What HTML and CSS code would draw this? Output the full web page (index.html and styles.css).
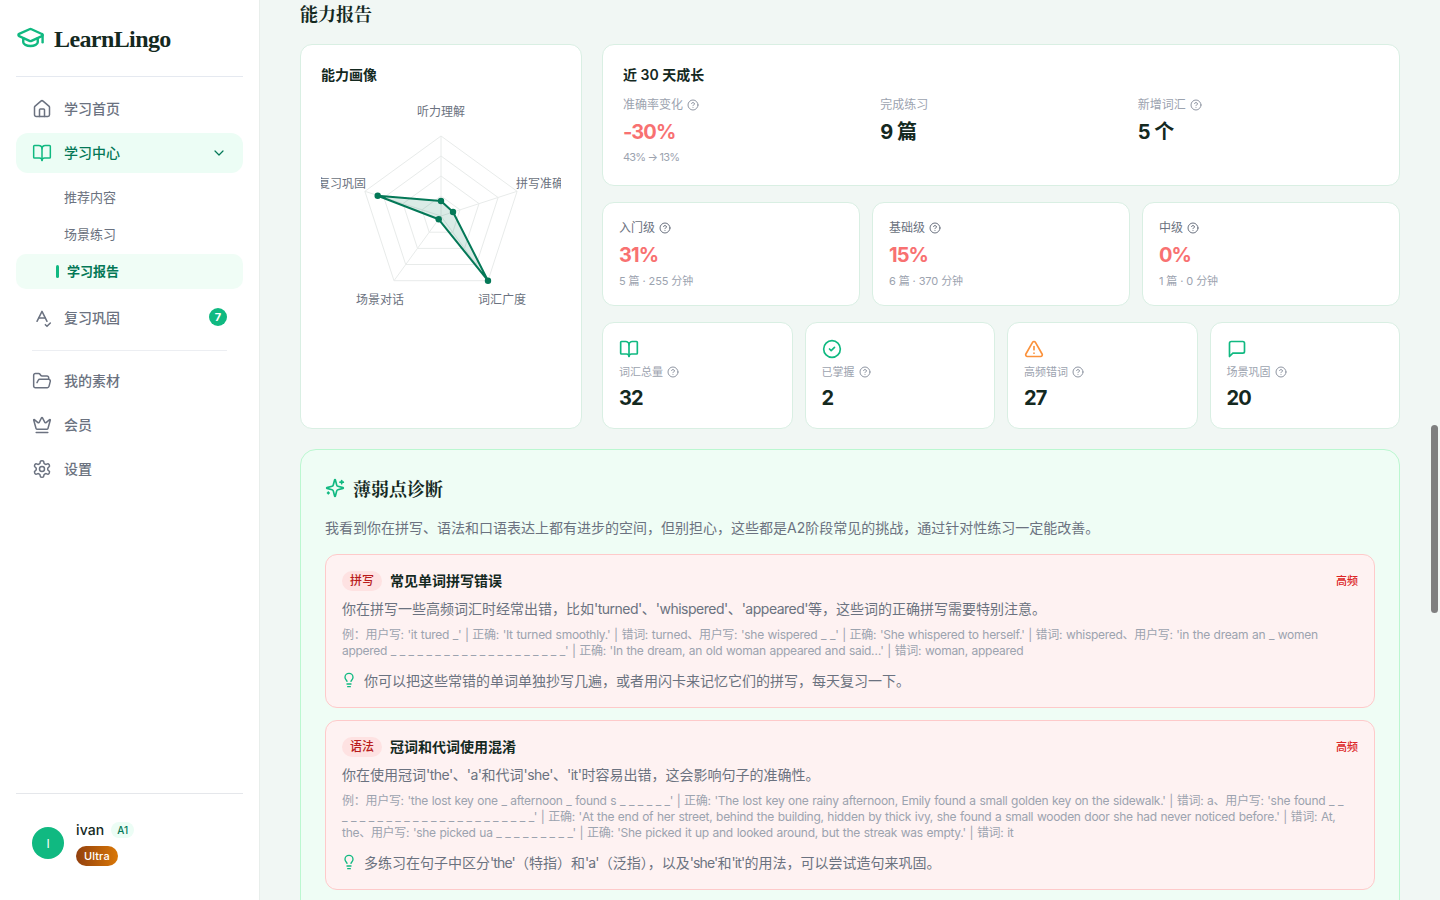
FILE: index.html
```html
<!DOCTYPE html>
<html lang="zh-CN">
<head>
<meta charset="utf-8">
<title>LearnLingo</title>
<link rel="stylesheet" href="styles.css">
</head>
<body>
<svg class="defs" aria-hidden="true">
  <symbol id="i-home" viewBox="0 0 24 24"><path d="M15 21v-8a1 1 0 0 0-1-1h-4a1 1 0 0 0-1 1v8"/><path d="M3 10a2 2 0 0 1 .709-1.528l7-5.999a2 2 0 0 1 2.582 0l7 5.999A2 2 0 0 1 21 10v9a2 2 0 0 1-2 2H5a2 2 0 0 1-2-2z"/></symbol>
  <symbol id="i-book" viewBox="0 0 24 24"><path d="M12 7v14"/><path d="M3 18a1 1 0 0 1-1-1V4a1 1 0 0 1 1-1h5a4 4 0 0 1 4 4 4 4 0 0 1 4-4h5a1 1 0 0 1 1 1v13a1 1 0 0 1-1 1h-6a3 3 0 0 0-3 3 3 3 0 0 0-3-3z"/></symbol>
  <symbol id="i-chev" viewBox="0 0 24 24"><path d="m6 9 6 6 6-6"/></symbol>
  <symbol id="i-spell" viewBox="0 0 24 24"><path d="m6 16 6-12 6 12"/><path d="M8 12h8"/><path d="m16 20 2 2 4-4"/></symbol>
  <symbol id="i-folder" viewBox="0 0 24 24"><path d="m6 14 1.5-2.9A2 2 0 0 1 9.24 10H20a2 2 0 0 1 1.94 2.5l-1.54 6a2 2 0 0 1-1.95 1.5H4a2 2 0 0 1-2-2V5a2 2 0 0 1 2-2h3.9a2 2 0 0 1 1.69.9l.81 1.2a2 2 0 0 0 1.67.9H18a2 2 0 0 1 2 2v2"/></symbol>
  <symbol id="i-crown" viewBox="0 0 24 24"><path d="M11.562 3.266a.5.5 0 0 1 .876 0L15.39 8.87a1 1 0 0 0 1.516.294L21.183 5.5a.5.5 0 0 1 .798.519l-2.834 10.246a1 1 0 0 1-.956.734H5.81a1 1 0 0 1-.957-.734L2.02 6.02a.5.5 0 0 1 .798-.519l4.276 3.664a1 1 0 0 0 1.516-.294z"/><path d="M5 21h14"/></symbol>
  <symbol id="i-gear" viewBox="0 0 24 24"><path d="M12.22 2h-.44a2 2 0 0 0-2 2v.18a2 2 0 0 1-1 1.73l-.43.25a2 2 0 0 1-2 0l-.15-.08a2 2 0 0 0-2.73.73l-.22.38a2 2 0 0 0 .73 2.73l.15.1a2 2 0 0 1 1 1.72v.51a2 2 0 0 1-1 1.74l-.15.09a2 2 0 0 0-.73 2.73l.22.38a2 2 0 0 0 2.73.73l.15-.08a2 2 0 0 1 2 0l.43.25a2 2 0 0 1 1 1.73V20a2 2 0 0 0 2 2h.44a2 2 0 0 0 2-2v-.18a2 2 0 0 1 1-1.73l.43-.25a2 2 0 0 1 2 0l.15.08a2 2 0 0 0 2.73-.73l.22-.39a2 2 0 0 0-.73-2.73l-.15-.08a2 2 0 0 1-1-1.74v-.5a2 2 0 0 1 1-1.74l.15-.09a2 2 0 0 0 .73-2.73l-.22-.38a2 2 0 0 0-2.73-.73l-.15.08a2 2 0 0 1-2 0l-.43-.25a2 2 0 0 1-1-1.73V4a2 2 0 0 0-2-2z"/><circle cx="12" cy="12" r="3"/></symbol>
  <symbol id="i-cap" viewBox="0 0 24 24"><path d="M21.42 10.922a1 1 0 0 0-.019-1.838L12.83 5.18a2 2 0 0 0-1.66 0L2.6 9.08a1 1 0 0 0 0 1.832l8.57 3.908a2 2 0 0 0 1.66 0z"/><path d="M22 10v6"/><path d="M6 12.5V16a6 3 0 0 0 12 0v-3.5"/></symbol>
  <symbol id="i-spark" viewBox="0 0 24 24"><path d="M9.937 15.5A2 2 0 0 0 8.5 14.063l-6.135-1.582a.5.5 0 0 1 0-.962L8.5 9.936A2 2 0 0 0 9.937 8.5l1.582-6.135a.5.5 0 0 1 .963 0L14.063 8.5A2 2 0 0 0 15.5 9.937l6.135 1.581a.5.5 0 0 1 0 .964L15.5 14.063a2 2 0 0 0-1.437 1.437l-1.582 6.135a.5.5 0 0 1-.963 0z"/><path d="M20 3v4"/><path d="M22 5h-4"/><path d="M4 17v2"/><path d="M5 18H3"/></symbol>
  <symbol id="i-bulb" viewBox="0 0 24 24"><path d="M15 14c.2-1 .7-1.7 1.5-2.5 1-.9 1.5-2.2 1.5-3.5A6 6 0 0 0 6 8c0 1 .2 2.2 1.5 3.5.7.7 1.3 1.5 1.5 2.5"/><path d="M9 18h6"/><path d="M10 22h4"/></symbol>
  <symbol id="i-help" viewBox="0 0 24 24"><circle cx="12" cy="12" r="10"/><path d="M9.09 9a3 3 0 0 1 5.83 1c0 2-3 3-3 3"/><path d="M12 17h.01"/></symbol>
  <symbol id="i-check" viewBox="0 0 24 24"><circle cx="12" cy="12" r="10"/><path d="m9 12 2 2 4-4"/></symbol>
  <symbol id="i-alert" viewBox="0 0 24 24"><path d="m21.73 18-8-14a2 2 0 0 0-3.48 0l-8 14A2 2 0 0 0 4 21h16a2 2 0 0 0 1.73-3"/><path d="M12 9v4"/><path d="M12 17h.01"/></symbol>
  <symbol id="i-msg" viewBox="0 0 24 24"><path d="M21 15a2 2 0 0 1-2 2H7l-4 4V5a2 2 0 0 1 2-2h14a2 2 0 0 1 2 2z"/></symbol>
</svg>

<div class="app">
  <aside class="sidebar">
    <div class="logo">
      <svg class="ico logo-ico"><use href="#i-cap"/></svg>
      <span class="logo-text">LearnLingo</span>
    </div>
    <nav class="nav">
      <a class="nav-item"><svg class="ico"><use href="#i-home"/></svg><span>学习首页</span></a>
      <a class="nav-item active"><svg class="ico"><use href="#i-book"/></svg><span>学习中心</span><svg class="ico chev"><use href="#i-chev"/></svg></a>
      <div class="sub">
        <a class="sub-item"><span>推荐内容</span></a>
        <a class="sub-item"><span>场景练习</span></a>
        <a class="sub-item current"><i class="bar"></i><span>学习报告</span></a>
      </div>
      <a class="nav-item review"><svg class="ico"><use href="#i-spell"/></svg><span>复习巩固</span><b class="badge">7</b></a>
      <div class="nav-divider"></div>
      <a class="nav-item"><svg class="ico"><use href="#i-folder"/></svg><span>我的素材</span></a>
      <a class="nav-item"><svg class="ico"><use href="#i-crown"/></svg><span>会员</span></a>
      <a class="nav-item"><svg class="ico"><use href="#i-gear"/></svg><span>设置</span></a>
    </nav>
    <div class="user">
      <div class="avatar">I</div>
      <div class="user-info">
        <div class="user-line"><span class="user-name">ivan</span><span class="level">A1</span></div>
        <span class="ultra">Ultra</span>
      </div>
    </div>
  </aside>

  <main class="main">
    <h1 class="page-title">能力报告</h1>
    <section class="overview">
      <div class="card radar-card">
        <h3 class="card-title">能力画像</h3>
        <svg class="radar" viewBox="0 0 240 240" width="240" height="240">
          <g class="grid-lines">
            <polygon points="120,100 139,113.8 131.8,136.2 108.2,136.2 101,113.8"/>
            <polygon points="120,80 158,107.6 143.5,152.4 96.5,152.4 82,107.6"/>
            <polygon points="120,60 177.1,101.5 155.3,168.5 84.7,168.5 62.9,101.5"/>
            <polygon points="120,40 196.1,95.3 167,184.7 73,184.7 43.9,95.3"/>
            <path d="M120 120V40M120 120L196.1 95.3M120 120L167 184.7M120 120L73 184.7M120 120L43.9 95.3"/>
          </g>
          <polygon class="shape" points="120,105 132,116 167,184.7 117.7,123.3 56.7,99.7"/>
          <g class="dots">
            <circle cx="120" cy="105" r="3.2"/><circle cx="132" cy="116" r="3.2"/><circle cx="167" cy="184.7" r="3.2"/><circle cx="117.7" cy="123.3" r="3.2"/><circle cx="56.7" cy="99.7" r="3.2"/>
          </g>
          <g class="labels">
            <text x="120" y="20" text-anchor="middle">听力理解</text>
            <text x="195" y="92" text-anchor="start">拼写准确</text>
            <text x="181" y="208" text-anchor="middle">词汇广度</text>
            <text x="59" y="208" text-anchor="middle">场景对话</text>
            <text x="45" y="92" text-anchor="end">复习巩固</text>
          </g>
        </svg>
      </div>

      <div class="right">
        <div class="card growth">
          <h3 class="card-title growth-title">近 30 天成长</h3>
          <div class="growth-grid">
            <div>
              <div class="g-label">准确率变化<svg class="ico help"><use href="#i-help"/></svg></div>
              <div class="g-value red">-30%</div>
              <div class="g-sub">43% → 13%</div>
            </div>
            <div>
              <div class="g-label">完成练习</div>
              <div class="g-value">9 篇</div>
            </div>
            <div>
              <div class="g-label">新增词汇<svg class="ico help"><use href="#i-help"/></svg></div>
              <div class="g-value">5 个</div>
            </div>
          </div>
        </div>

        <div class="levels">
          <div class="card level-card">
            <div class="l-label">入门级<svg class="ico help dark"><use href="#i-help"/></svg></div>
            <div class="l-value">31%</div>
            <div class="l-sub">5 篇 · 255 分钟</div>
          </div>
          <div class="card level-card">
            <div class="l-label">基础级<svg class="ico help dark"><use href="#i-help"/></svg></div>
            <div class="l-value">15%</div>
            <div class="l-sub">6 篇 · 370 分钟</div>
          </div>
          <div class="card level-card">
            <div class="l-label">中级<svg class="ico help dark"><use href="#i-help"/></svg></div>
            <div class="l-value">0%</div>
            <div class="l-sub">1 篇 · 0 分钟</div>
          </div>
        </div>

        <div class="stats">
          <div class="card stat-card">
            <svg class="ico stat-ico green"><use href="#i-book"/></svg>
            <div class="s-label">词汇总量<svg class="ico help"><use href="#i-help"/></svg></div>
            <div class="s-value">32</div>
          </div>
          <div class="card stat-card">
            <svg class="ico stat-ico green"><use href="#i-check"/></svg>
            <div class="s-label">已掌握<svg class="ico help"><use href="#i-help"/></svg></div>
            <div class="s-value">2</div>
          </div>
          <div class="card stat-card">
            <svg class="ico stat-ico orange"><use href="#i-alert"/></svg>
            <div class="s-label">高频错词<svg class="ico help"><use href="#i-help"/></svg></div>
            <div class="s-value">27</div>
          </div>
          <div class="card stat-card">
            <svg class="ico stat-ico green"><use href="#i-msg"/></svg>
            <div class="s-label">场景巩固<svg class="ico help"><use href="#i-help"/></svg></div>
            <div class="s-value">20</div>
          </div>
        </div>
      </div>
    </section>

    <section class="diagnosis">
      <h2 class="diag-title"><svg class="ico spark"><use href="#i-spark"/></svg>薄弱点诊断</h2>
      <p class="diag-intro">我看到你在拼写、语法和口语表达上都有进步的空间，但别担心，这些都是A2阶段常见的挑战，通过针对性练习一定能改善。</p>

      <article class="issue">
        <header class="issue-head"><span class="tag">拼写</span><h4 class="issue-title">常见单词拼写错误</h4><span class="freq">高频</span></header>
        <p class="issue-desc">你在拼写一些高频词汇时经常出错，比如<span class="en">'turned'</span>、<span class="en">'whispered'</span>、<span class="en">'appeared'</span>等，这些词的正确拼写需要特别注意。</p>
        <p class="issue-ex">例：用户写: 'it tured _' | 正确: 'It turned smoothly.' | 错词: turned、用户写: 'she wispered _ _' | 正确: 'She whispered to herself.' | 错词: whispered、用户写: 'in the dream an _ women appered _ _ _ _ _ _ _ _ _ _ _ _ _ _ _ _ _ _ _ _' | 正确: 'In the dream, an old woman appeared and said…' | 错词: woman, appeared</p>
        <div class="issue-tip"><svg class="ico bulb"><use href="#i-bulb"/></svg><span>你可以把这些常错的单词单独抄写几遍，或者用闪卡来记忆它们的拼写，每天复习一下。</span></div>
      </article>

      <article class="issue">
        <header class="issue-head"><span class="tag">语法</span><h4 class="issue-title">冠词和代词使用混淆</h4><span class="freq">高频</span></header>
        <p class="issue-desc">你在使用冠词<span class="en">'the'</span>、<span class="en">'a'</span>和代词<span class="en">'she'</span>、<span class="en">'it'</span>时容易出错，这会影响句子的准确性。</p>
        <p class="issue-ex">例：用户写: 'the lost key one _ afternoon _ found s _ _ _ _ _ _' | 正确: 'The lost key one rainy afternoon, Emily found a small golden key on the sidewalk.' | 错词: a、用户写: 'she found _ _<br>_ _ _ _ _ _ _ _ _ _ _ _ _ _ _ _ _ _ _ _ _ _' | 正确: 'At the end of her street, behind the building, hidden by thick ivy, she found a small wooden door she had never noticed before.' | 错词: At,<br>the、用户写: 'she picked ua _ _ _ _ _ _ _ _ _' | 正确: 'She picked it up and looked around, but the streak was empty.' | 错词: it</p>
        <div class="issue-tip"><svg class="ico bulb"><use href="#i-bulb"/></svg><span>多练习在句子中区分<span class="en">'the'</span>（特指）和<span class="en">'a'</span>（泛指），以及<span class="en">'she'</span>和<span class="en">'it'</span>的用法，可以尝试造句来巩固。</span></div>
      </article>
    </section>
  </main>
  <div class="scroll-thumb"></div>
</div>
</body>
</html>
```

FILE: styles.css
```css
* { box-sizing: border-box; }
html, body { margin: 0; height: 100%; overflow: hidden; }
body {
  font-family: Inter, "Noto Sans CJK SC", sans-serif;
  color: #14291f;
  background: #f1f7f4;
}
h1, h2, h3, h4, p { margin: 0; }
.defs { width: 0; height: 0; position: absolute; }
.ico {
  width: 20px; height: 20px; flex: none;
  fill: none; stroke: currentColor; stroke-width: 2;
  stroke-linecap: round; stroke-linejoin: round;
}
.app { display: flex; height: 900px; position: relative; }

/* Sidebar */
.sidebar {
  width: 260px; flex: none; height: 900px; background: #fff;
  border-right: 1px solid #e8eeeb;
  padding: 0 16px; display: flex; flex-direction: column;
}
.logo {
  height: 77px; display: flex; align-items: center; gap: 9px;
  border-bottom: 1px solid #e5e9f0; padding-top: 2px;
}
.logo-ico { width: 29px; height: 29px; color: #10b981; margin-top: -4px; }
.logo-text {
  font-family: "Liberation Serif", serif; font-size: 24px; font-weight: 700;
  letter-spacing: -.6px; color: #14291f; line-height: 1;
}
.nav { display: flex; flex-direction: column; gap: 4px; padding-top: 12px; flex: 1; }
.nav-item {
  height: 40px; display: flex; align-items: center; gap: 12px;
  padding: 0 16px; border-radius: 12px; font-size: 14px; font-weight: 500; color: #6b7280;
}
.nav-item > span, .sub-item > span { margin-bottom: 2px; }
.nav-item .ico { width: 20px; height: 20px; stroke-width: 1.8; }
.nav-item.active { background: #ecfdf5; color: #047857; }
.nav-item.active .ico { color: #10b981; }
.nav-item.active .chev { margin-left: auto; width: 16px; height: 16px; color: #047857; }
.sub { display: flex; flex-direction: column; gap: 2px; padding-top: 3px; }
.sub-item {
  height: 35px; display: flex; align-items: center; padding-left: 48px;
  border-radius: 10px; font-size: 13px; color: #6b7280;
}
.sub-item.current { background: #f0fdf6; color: #047857; font-weight: 600; padding-left: 40px; gap: 8px; }
.bar { width: 3px; height: 13px; border-radius: 2px; background: #10b981; }
.review { margin-top: 5px; }
.badge {
  margin-left: auto; margin-bottom: 2px; width: 18px; height: 18px; border-radius: 50%;
  background: #10b981; color: #fff; font-size: 11px; font-weight: 700;
  display: flex; align-items: center; justify-content: center;
}
.nav-divider { height: 1px; background: #eceef2; margin: 8px 16px 6px; }
.user {
  height: 107px; border-top: 1px solid #e5e7eb; display: flex; align-items: center;
  gap: 12px; padding: 0 16px 8px; margin-top: auto;
}
.avatar {
  width: 32px; height: 32px; border-radius: 50%; background: #10b981; color: #fff;
  font-size: 12px; display: flex; align-items: center; justify-content: center;
}
.user-info { display: flex; flex-direction: column; align-items: flex-start; gap: 6px; }
.user-line { display: flex; align-items: center; gap: 7px; }
.user-name { font-size: 14px; font-weight: 500; color: #14291f; line-height: 20px; letter-spacing: .1px; }
.level {
  font-size: 10px; font-weight: 500; color: #047857; background: #ecfdf5;
  padding: 0 6px; height: 16px; line-height: 16px; border-radius: 8px;
}
.ultra {
  font-size: 11px; font-weight: 500; color: #fff; height: 20px; line-height: 20px;
  padding: 0 8px; border-radius: 10px; letter-spacing: .1px;
  background: linear-gradient(90deg, #92400e, #d97706);
}

/* Main */
.main { flex: 1; min-width: 0; padding: 0 40px; overflow: hidden; }
.page-title {
  font-family: "Noto Serif CJK SC", "Liberation Serif", serif;
  font-size: 18px; font-weight: 700; line-height: 26px; margin-bottom: 18px; color: #14291f;
}
.overview { display: grid; grid-template-columns: 282px 1fr; gap: 20px; }
.card { background: #fff; border: 1px solid #d9efe3; border-radius: 12px; }
.card-title { font-size: 14px; font-weight: 600; line-height: 20px; color: #14291f; }
.radar-card { padding: 20px 20px 0; }
.radar { display: block; margin-top: 11px; }
.grid-lines polygon, .grid-lines path { fill: none; stroke: #e8ebea; stroke-width: 1; }
.shape { fill: rgba(4,120,87,.15); stroke: #047857; stroke-width: 2; stroke-linejoin: round; }
.dots circle { fill: #047857; }
.labels text { font-size: 12px; fill: #6b7280; font-family: Inter, "Noto Sans CJK SC", sans-serif; }
.right { display: flex; flex-direction: column; gap: 16px; min-width: 0; }
.growth { padding: 20px; }
.growth-title { margin-bottom: 11px; }
.growth-grid { display: grid; grid-template-columns: repeat(3, 1fr); gap: 16px; }
.help { width: 12px; height: 12px; margin-left: 4px; color: #8f96a3; vertical-align: -2px; }
.help.dark { color: #6b7280; }
.g-label { font-size: 12px; line-height: 18px; color: #9ca3af; }
.g-value { font-size: 20px; font-weight: 700; line-height: 30px; margin-top: 3px; color: #14291f; letter-spacing: -.5px; }
.g-value.red { letter-spacing: -.9px; }
.g-value.red, .l-value { color: #f87171; }
.g-sub { font-size: 11px; line-height: 16px; color: #9ca3af; margin-top: 2px; letter-spacing: -.8px; }
.levels { display: grid; grid-template-columns: repeat(3, 1fr); gap: 12px; }
.level-card { padding: 16px; height: 104px; }
.l-label { font-size: 12px; line-height: 18px; color: #6b7280; }
.l-value { font-size: 20px; font-weight: 700; line-height: 28px; margin-top: 4px; letter-spacing: -.9px; }
.l-sub { font-size: 11px; line-height: 16px; color: #9ca3af; margin-top: 4px; letter-spacing: -.1px; }
.stats { display: grid; grid-template-columns: repeat(4, 1fr); gap: 12px; }
.stat-card { padding: 16px; height: 107px; }
.stat-ico { display: block; }
.green { color: #10b981; }
.orange { color: #fb923c; }
.s-label { font-size: 11px; line-height: 16px; color: #9ca3af; margin-top: 5px; }
.s-value { font-size: 20px; font-weight: 700; line-height: 28px; margin-top: 4px; color: #14291f; letter-spacing: -.9px; }

/* Diagnosis */
.diagnosis {
  margin-top: 20px; background: #effdf5; border: 1px solid #bbf7d0; border-radius: 16px;
  padding: 24px 24px 40px;
}
.diag-title {
  font-family: "Noto Serif CJK SC", "Liberation Serif", serif;
  font-size: 18px; font-weight: 700; line-height: 28px; display: flex; align-items: center; gap: 8px;
  color: #14291f;
}
.spark { color: #10b981; }
.diag-intro { font-size: 14px; line-height: 20px; color: #6b7280; margin-top: 16px; margin-bottom: 16px; }
.issue { background: #fef2f2; border: 1px solid #fecaca; border-radius: 12px; padding: 16px; margin-bottom: 12px; }
.issue-head { display: flex; align-items: center; gap: 8px; height: 20px; }
.tag {
  font-size: 12px; font-weight: 500; line-height: 20px; padding: 0 8px; border-radius: 10px;
  background: #fee2e2; color: #b91c1c;
}
.issue-title { font-size: 14px; font-weight: 600; line-height: 20px; color: #14291f; }
.freq { margin-left: auto; margin-bottom: 2px; font-size: 11px; font-weight: 500; color: #dc2626; }
.issue-desc { font-size: 14px; line-height: 20px; color: #6b7280; margin-top: 8px; }
.en { letter-spacing: -.5px; }
.issue-ex { font-size: 12px; line-height: 16px; color: #9ca3af; margin-top: 8px; letter-spacing: -.28px; word-spacing: .6px; }
.issue-tip { display: flex; align-items: center; gap: 7px; font-size: 14px; line-height: 20px; color: #6b7280; margin-top: 12px; }
.issue-tip .en { letter-spacing: -.85px; }
.bulb { width: 16px; height: 16px; color: #10b981; margin-top: -2px; margin-left: -1px; }

.scroll-thumb {
  position: absolute; right: 2px; top: 425px; width: 7px; height: 188px;
  border-radius: 4px; background: #7f7f7f;
}
```
